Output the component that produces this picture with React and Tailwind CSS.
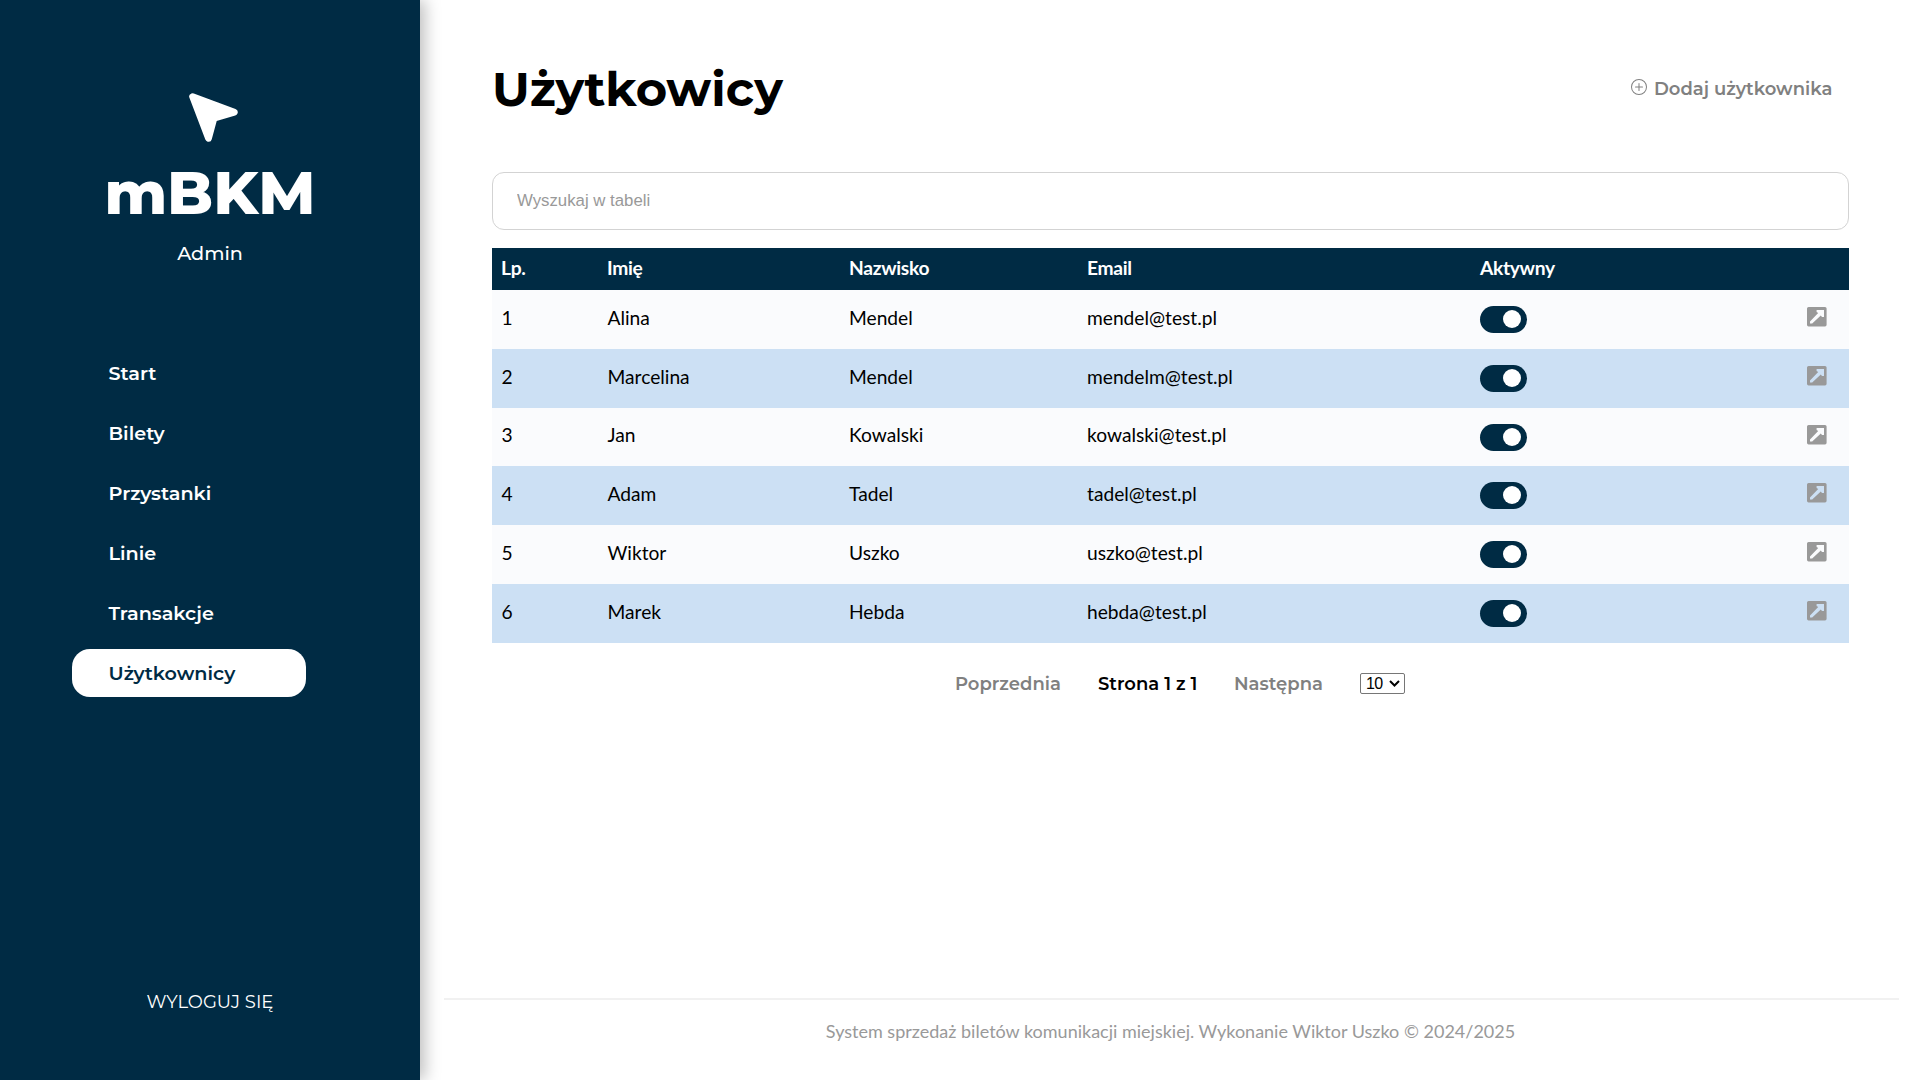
import React from "react";
import { BsPlusCircle } from "react-icons/bs";

const navItems = [
  { label: "Start" },
  { label: "Bilety" },
  { label: "Przystanki" },
  { label: "Linie" },
  { label: "Transakcje" },
  { label: "Użytkownicy", active: true },
];

const users = [
  { id: 1, first: "Alina", last: "Mendel", email: "mendel@test.pl" },
  { id: 2, first: "Marcelina", last: "Mendel", email: "mendelm@test.pl" },
  { id: 3, first: "Jan", last: "Kowalski", email: "kowalski@test.pl" },
  { id: 4, first: "Adam", last: "Tadel", email: "tadel@test.pl" },
  { id: 5, first: "Wiktor", last: "Uszko", email: "uszko@test.pl" },
  { id: 6, first: "Marek", last: "Hebda", email: "hebda@test.pl" },
];

const columns = "grid grid-cols-[106px_242px_238px_393px_1fr_auto] items-center pl-[9px]";

function Logo() {
  return (
    <svg viewBox="0 0 49 49" className="ml-[7px] h-[49px] w-[49px]" fill="white" stroke="white" strokeWidth="6.8" strokeLinejoin="round">
      <path d="M3.6 3.6 45.3 19.3 24.9 25.3 19.5 45.4Z" />
    </svg>
  );
}

function OpenIcon() {
  return (
    <svg viewBox="0 0 20 20" className="h-5 w-5" fill="#999999">
      <path
        fillRule="evenodd"
        d="M1.6 0H18a1.6 1.6 0 0 1 1.6 1.6V17.8a1.6 1.6 0 0 1-1.6 1.6H1.6A1.6 1.6 0 0 1 0 17.8V1.6A1.6 1.6 0 0 1 1.6 0ZM9.6 2.9V4.9L11.2 6 3 14.4V16.6H5.2L13.8 8.6 15 10.1H17V2.9Z"
      />
    </svg>
  );
}

function Toggle() {
  return (
    <button className="flex h-[27px] w-[47px] items-center justify-end rounded-full bg-[#002b44] pr-[6px] pb-px">
      <span className="h-[18px] w-[18px] rounded-full bg-white" />
    </button>
  );
}

function Sidebar() {
  return (
    <aside className="z-10 flex w-[420px] shrink-0 flex-col items-center bg-[#002b44] pt-[93px] pb-[66px] text-white shadow-[5px_0_15px_rgba(0,0,0,0.25)]">
      <Logo />
      <div className="mt-[21px] text-[60px] leading-[60px] font-extrabold">mBKM</div>
      <div className="mt-[18px] text-[19.2px] leading-6 font-medium">Admin</div>
      <nav className="mt-[84px] flex w-full flex-col gap-3 pl-[72px]">
        {navItems.map((item) => (
          <a
            key={item.label}
            className={
              item.active
                ? "flex h-12 w-[234px] items-center rounded-[18px] bg-white pt-px pl-[36.5px] text-[19.2px] font-semibold text-[#002b44]"
                : "flex h-12 w-[234px] items-center pt-px pl-[36.5px] text-[19.2px] font-semibold"
            }
          >
            {item.label}
          </a>
        ))}
      </nav>
      <button className="mt-auto text-[18px] leading-6">WYLOGUJ SIĘ</button>
    </aside>
  );
}

function Pagination() {
  return (
    <div className="mt-[28px] grid h-6 grid-cols-[143px_136px_126px_45px] items-center pl-[463px] text-[18px] font-semibold text-[#808080]">
      <span>Poprzednia</span>
      <span className="text-black">Strona 1 z 1</span>
      <span>Następna</span>
      <button className="mb-px flex h-[21px] items-center gap-[6px] rounded-[2px] border border-[#767676] pl-[5px] font-['Liberation_Sans',sans-serif] text-[16px] leading-none font-normal tracking-[-0.6px] text-black">
        10
        <svg viewBox="0 0 11 7" className="h-[7px] w-[11px]" fill="none" stroke="black" strokeWidth="2">
          <path d="M1 1 5.5 5.5 10 1" />
        </svg>
      </button>
    </div>
  );
}

export default function App() {
  return (
    <div className="flex h-[1080px] w-[1920px] overflow-hidden bg-white font-['Montserrat',Inter,sans-serif] text-black">
      <Sidebar />
      <div className="flex flex-1 flex-col">
        <main className="flex flex-1 flex-col pt-[57px] pr-[71px] pl-[72px]">
          <header className="flex h-16 items-center justify-between">
            <h1 className="text-[48px] leading-[64px] font-bold">Użytkowicy</h1>
            <button className="flex w-[218px] items-center text-[18px] font-semibold text-[#808080]">
              <BsPlusCircle className="mb-1 h-4 w-4 shrink-0" />
              <span className="ml-[7px] whitespace-nowrap">Dodaj użytkownika</span>
            </button>
          </header>
          <input
            placeholder="Wyszukaj w tabeli"
            className="mt-[51px] h-[58px] shrink-0 rounded-xl border border-[#d3d3d3] pr-6 pb-px pl-6 font-['Liberation_Sans',sans-serif] text-[16.8px] placeholder:text-[#999999]"
          />
          <section className="mt-[18px] font-['Lato',sans-serif] text-[19.2px]">
            <div className={`${columns} h-[42px] bg-[#002b44] pb-px font-bold tracking-[-0.3px] text-white`}>
              <span>Lp.</span>
              <span>Imię</span>
              <span>Nazwisko</span>
              <span>Email</span>
              <span>Aktywny</span>
            </div>
            {users.map((user) => (
              <div key={user.id} className={`${columns} h-[58.83px] odd:bg-[#cce0f4] even:bg-[#fafbfd]`}>
                <span className="pb-[2.5px] pl-[0.5px]">{user.id}</span>
                <span className="pb-[2.5px] pl-[0.5px]">{user.first}</span>
                <span className="pb-[2.5px]">{user.last}</span>
                <span className="pb-[2.5px]">{user.email}</span>
                <Toggle />
                <button className="pr-[22px] pb-[5px]">
                  <OpenIcon />
                </button>
              </div>
            ))}
          </section>
          <Pagination />
        </main>
        <footer className="mr-[21px] ml-6 h-[82px] border-t-2 border-[#f1f1f1] pt-[19px] pr-[2px] text-center font-['Lato',sans-serif] text-[18px] leading-6 text-[#999999]">
          System sprzedaż biletów komunikacji miejskiej. Wykonanie Wiktor Uszko © 2024/2025
        </footer>
      </div>
    </div>
  );
}
